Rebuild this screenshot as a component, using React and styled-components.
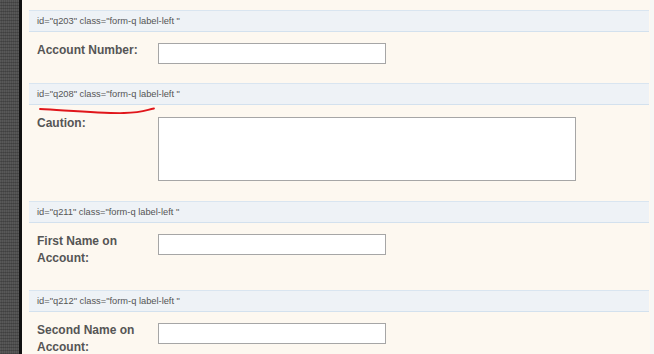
import styled, { createGlobalStyle } from 'styled-components';

const GlobalStyle = createGlobalStyle`
  html, body {
    margin: 0;
    padding: 0;
    height: 100%;
    overflow: hidden;
  }
  body {
    font-family: "Liberation Sans", Arial, sans-serif;
  }
`;

const Page = styled.div`
  display: flex;
  height: 354px;
  overflow: hidden;
`;

const Strip = styled.div`
  width: 19px;
  flex: none;
  background-color: #4e4e4e;
  background-image:
    repeating-linear-gradient(0deg, rgba(0, 0, 0, 0.18) 0 1px, transparent 1px 3px),
    repeating-linear-gradient(90deg, rgba(255, 255, 255, 0.06) 0 1px, transparent 1px 2px);
  border-right: 3px solid #111;
`;

const Panel = styled.div`
  flex: 1;
  background: #fdf8f0;
  padding: 10px 1px 0 7px;
`;

const Edge = styled.div`
  width: 4px;
  flex: none;
  background: #f7f7f5;
`;

const Question = styled.div`
  position: relative;
`;

const Bar = styled.div`
  height: 20px;
  display: flex;
  align-items: center;
  padding-left: 8px;
  background: #eef2f6;
  border-top: 1px solid #d9e5f0;
  border-bottom: 1px solid #d3e1ee;
  font-size: 9.3px;
  color: #555;
`;

const Body = styled.div`
  display: flex;
  align-items: flex-start;
  padding: 11px 0 ${(p) => p.$bottom}px 8px;
`;

const Label = styled.div`
  width: 121px;
  flex: none;
  margin-top: -1px;
  font-size: 12px;
  line-height: 17px;
  font-weight: bold;
  color: #555;
`;

const Input = styled.div`
  width: 228px;
  height: 21px;
  box-sizing: border-box;
  background: #fff;
  border: 1px solid #a6a6a6;
`;

const TextArea = styled(Input)`
  width: 418px;
  height: 64px;
  margin-top: 1px;
`;

const Scribble = styled.svg`
  position: absolute;
  left: 0;
  top: 0;
  pointer-events: none;
`;

const questions = [
  { id: 'q203', label: 'Account Number:', field: 'input', bottom: 19 },
  { id: 'q208', label: 'Caution:', field: 'textarea', bottom: 20, mark: true },
  { id: 'q211', label: ['First Name on', 'Account:'], field: 'input', bottom: 23 },
  { id: 'q212', label: ['Second Name on', 'Account:'], field: 'input', bottom: 20 },
];

const App = () => (
  <>
    <GlobalStyle />
    <Page>
      <Strip />
      <Panel>
        {questions.map((q) => (
          <Question key={q.id}>
            <Bar>id="{q.id}" class="form-q label-left "</Bar>
            <Body $bottom={q.bottom}>
              <Label>
                {Array.isArray(q.label)
                  ? q.label.map((line) => <div key={line}>{line}</div>)
                  : q.label}
              </Label>
              {q.field === 'textarea' ? <TextArea /> : <Input />}
            </Body>
            {q.mark && (
              <Scribble width="140" height="34" viewBox="0 0 140 34">
                <path
                  d="M11 26 C 45 28, 75 30.5, 95 30 S 118 26.5, 125 25.5"
                  fill="none"
                  stroke="#e0161b"
                  strokeWidth="1.8"
                  strokeLinecap="round"
                />
              </Scribble>
            )}
          </Question>
        ))}
      </Panel>
      <Edge />
    </Page>
  </>
);

export default App;
